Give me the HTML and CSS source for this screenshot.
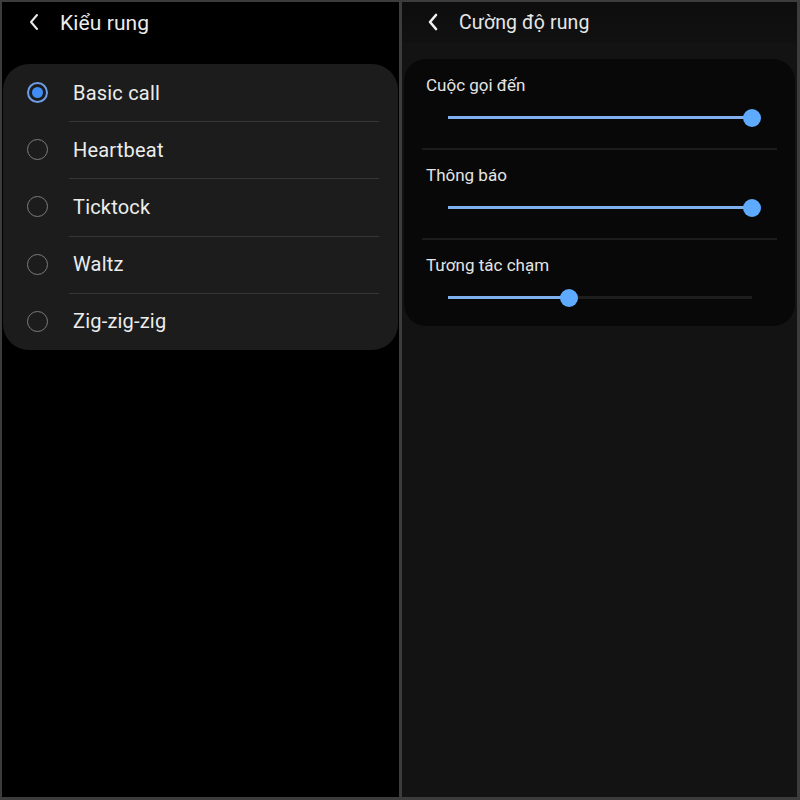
FILE: index.html
```html
<!DOCTYPE html>
<html lang="vi">
<head>
<meta charset="utf-8">
<link rel="stylesheet" href="styles.css">
</head>
<body>
<div class="frame">
  <section class="panel panel-left">
    <header class="bar">
      <svg class="back" width="12" height="18" viewBox="0 0 12 18"><path d="M9 2 L3 9 L9 16" fill="none" stroke="#eaeaea" stroke-width="2" stroke-linecap="round" stroke-linejoin="round"/></svg>
      <h1 class="title">Kiểu rung</h1>
    </header>
    <ul class="list">
      <li class="row"><span class="radio checked"></span><span class="label">Basic call</span></li>
      <li class="row"><span class="radio"></span><span class="label">Heartbeat</span></li>
      <li class="row"><span class="radio"></span><span class="label">Ticktock</span></li>
      <li class="row"><span class="radio"></span><span class="label">Waltz</span></li>
      <li class="row"><span class="radio"></span><span class="label">Zig-zig-zig</span></li>
    </ul>
  </section>
  <section class="panel panel-right">
    <header class="bar bar-right">
      <svg class="back" width="12" height="18" viewBox="0 0 12 18"><path d="M9 2 L3 9 L9 16" fill="none" stroke="#f2f2f2" stroke-width="2.6" stroke-linecap="round" stroke-linejoin="round"/></svg>
      <h1 class="title title-right">Cường độ rung</h1>
    </header>
    <div class="card">
      <div class="item">
        <div class="item-label">Cuộc gọi đến</div>
        <div class="slider"><div class="fill" style="width:100%"><span class="thumb"></span></div></div>
      </div>
      <div class="item">
        <div class="item-label">Thông báo</div>
        <div class="slider"><div class="fill" style="width:100%"><span class="thumb"></span></div></div>
      </div>
      <div class="item item-last">
        <div class="item-label">Tương tác chạm</div>
        <div class="slider"><div class="fill" style="width:39.9%"><span class="thumb"></span></div></div>
      </div>
    </div>
  </section>
</div>
</body>
</html>
```

FILE: styles.css
```css
* { box-sizing: border-box; margin: 0; padding: 0; }
html, body { width: 800px; height: 800px; background: #3c3c3c; overflow: hidden; }
body { font-family: "Roboto", "Noto Sans", sans-serif; color: #ececec; }

.frame {
  width: 800px; height: 800px;
  padding: 2px 3px 3px 2px;
  display: grid;
  grid-template-columns: 397px 1fr;
  column-gap: 3px;
}
.panel { height: 100%; }
.panel-left { background: #000; }
.panel-right { background: #131313; }

.bar {
  height: 41px;
  display: flex;
  align-items: center;
  padding-left: 26px;
}
.back { flex: none; margin-top: -1px; }
.title {
  font-weight: 400;
  font-size: 21px;
  margin-left: 20px;
  color: #ececec;
  letter-spacing: 0.1px;
}
.bar-right {
  padding-left: 25px;
  background: linear-gradient(#0d0d0d, #111111);
  height: 41px;
}
.title-right { font-size: 19.5px; margin-left: 20px; color: #e6e6e6; }

.list {
  list-style: none;
  margin: 21px 0 0 1px;
  width: 395px;
  background: #1c1c1c;
  border-radius: 26px;
  overflow: hidden;
}
.row {
  height: 57.2px;
  display: flex;
  align-items: center;
  padding-left: 24px;
  position: relative;
}
.row + .row::before {
  content: "";
  position: absolute;
  left: 66px; right: 19px; top: 0;
  height: 1px;
  background: #363636;
}
.radio {
  width: 21px; height: 21px;
  border-radius: 50%;
  border: 1.5px solid #7c7c7c;
  flex: none;
  display: flex; align-items: center; justify-content: center;
}
.radio.checked { border: 2px solid #6f9ee6; }
.radio.checked::after {
  content: "";
  width: 11px; height: 11px;
  border-radius: 50%;
  background: #3f8cf5;
}
.label {
  margin-left: 25px;
  font-size: 20px;
  color: #ececec;
  letter-spacing: 0.2px;
}

.card {
  margin: 16px 2px 0 2px;
  background: #080808;
  border-radius: 22px;
}
.item {
  height: 90px;
  padding: 15px 0 0 22px;
  position: relative;
}
.item-last { height: 87px; }
.item + .item::before {
  content: "";
  position: absolute;
  left: 18px; right: 18px; top: -1px;
  height: 2px;
  background: #1c1c1c;
}
.item-label { font-size: 17px; color: #e4e4e4; height: 22px; line-height: 22px; }
.slider {
  margin: 20px 0 0 22px;
  width: 304px;
  height: 3px;
  background: #1e1e1e;
  position: relative;
}
.fill {
  height: 3px;
  background: #7fb0ee;
  position: relative;
}
.thumb {
  position: absolute;
  right: -9px; top: -7.5px;
  width: 18px; height: 18px;
  border-radius: 50%;
  background: #5eaaff;
}
```
